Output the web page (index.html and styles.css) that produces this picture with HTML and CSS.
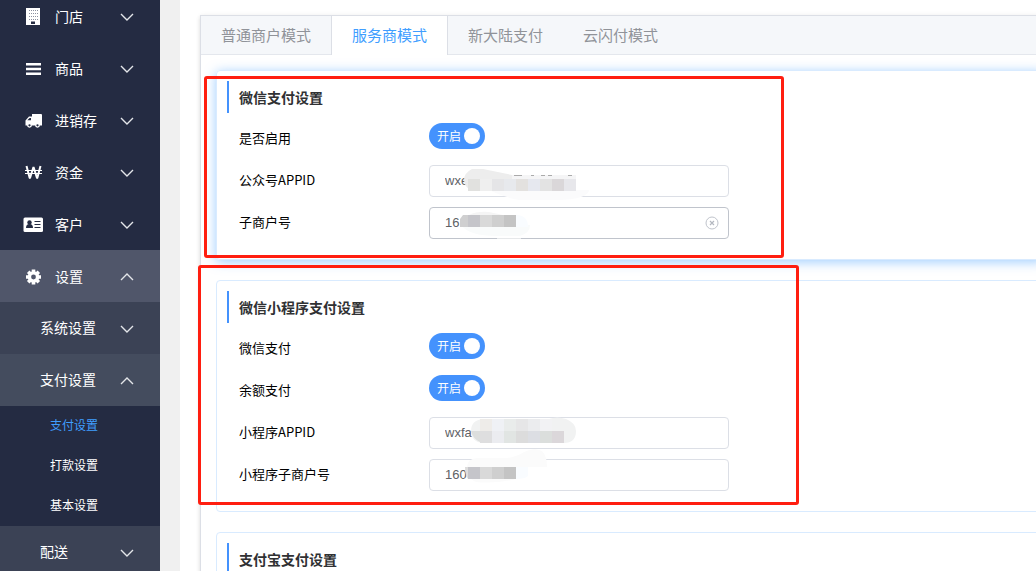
FILE: index.html
```html
<!DOCTYPE html>
<html lang="zh-CN">
<head>
  <meta charset="UTF-8" />
  <title>支付设置</title>
  <meta name="viewport" content="width=device-width, initial-scale=1.0" />
  <link rel="stylesheet" href="styles.css">
</head>
<body>
  <svg class="defs" aria-hidden="true">
    <symbol id="down" viewBox="0 0 14 8"><path d="M1 1l6 6 6-6" fill="none" stroke="#e4e6ea" stroke-width="1.4"/></symbol>
    <symbol id="up" viewBox="0 0 14 8"><path d="M1 7l6-6 6 6" fill="none" stroke="#e4e6ea" stroke-width="1.4"/></symbol>
  </svg>

  <div class="page">
    <nav class="sidebar">
      <a class="item" href="#">
        <svg class="icon" viewBox="0 0 24 20"><path fill="#fff" d="M5 2h14v17H5z"/><path d="M8 4.5h9M8 7.5h9M8 10.5h9M8 13.5h9" stroke="#8b90a0" stroke-width="1" stroke-dasharray="1 1"/><path fill="#242b42" d="M10 15.500h4V18h-4z"/></svg>
        <span>门店</span><svg class="arrow"><use href="#down"/></svg>
      </a>
      <a class="item" href="#">
        <svg class="icon" viewBox="0 0 24 20"><path fill="#fff" d="M5 5h15v2.400H5zM5 9.800h15v2.400H5zM5 14.600h15V17H5z"/></svg>
        <span>商品</span><svg class="arrow"><use href="#down"/></svg>
      </a>
      <a class="item" href="#">
        <svg class="icon" viewBox="0 0 24 20"><path fill="#fff" d="M11 4h9q1 0 1 1v10.500H4.500V10.500L8 6.500h3z"/><path fill="#242b42" d="M6.300 10.300L8.600 8H10v2.300z"/><g fill="#242b42" stroke="#fff" stroke-width="1.300"><circle cx="8.500" cy="15.300" r="1.800"/><circle cx="16.500" cy="15.300" r="1.800"/></g></svg>
        <span>进销存</span><svg class="arrow"><use href="#down"/></svg>
      </a>
      <a class="item" href="#">
        <svg class="icon" viewBox="0 0 24 20"><path d="M5.500 4l3.200 12h.3L12.500 5l3.500 11h.3L19.500 4" fill="none" stroke="#fff" stroke-width="2" stroke-linejoin="bevel"/><path d="M4 8.500h17M4 11.500h17" stroke="#fff" stroke-width="1"/></svg>
        <span>资金</span><svg class="arrow"><use href="#down"/></svg>
      </a>
      <a class="item" href="#">
        <svg class="icon" viewBox="0 0 24 20"><rect x="2.500" y="3.500" width="19.500" height="14.500" rx="1.500" fill="#fff"/><g fill="#242b42"><circle cx="8.500" cy="8.500" r="2.200"/><path d="M5 14q0-4 3.500-4t3.500 4z"/></g><path d="M13.500 7.500h6M13.500 10.500h6M13.500 13.500h6" stroke="#242b42" stroke-width="1"/></svg>
        <span>客户</span><svg class="arrow"><use href="#down"/></svg>
      </a>
      <a class="item open" href="#">
        <svg class="icon" viewBox="0 0 24 20"><g stroke="#fff" stroke-width="3.600"><path d="M12.500 3.500v15M5 11h15M7.200 5.700l10.600 10.600M17.800 5.700L7.200 16.300"/></g><circle cx="12.500" cy="11" r="5.800" fill="#fff"/><circle cx="12.500" cy="11" r="2.400" fill="#50566a"/></svg>
        <span>设置</span><svg class="arrow"><use href="#up"/></svg>
      </a>
      <a class="item sub" href="#"><span>系统设置</span><svg class="arrow"><use href="#down"/></svg></a>
      <a class="item sub open" href="#"><span>支付设置</span><svg class="arrow"><use href="#up"/></svg></a>
      <a class="leaf active" href="#">支付设置</a>
      <a class="leaf" href="#">打款设置</a>
      <a class="leaf" href="#">基本设置</a>
      <a class="item sub" href="#"><span>配送</span><svg class="arrow"><use href="#down"/></svg></a>
    </nav>

    <main class="main">
      <div class="tabs">
        <div class="tab-header">
          <button class="tab" type="button">普通商户模式</button>
          <button class="tab active" type="button">服务商模式</button>
          <button class="tab" type="button">新大陆支付</button>
          <button class="tab" type="button">云闪付模式</button>
        </div>

        <div class="tab-body">
          <section class="card hover">
            <h2>微信支付设置</h2>
            <div class="row">
              <label for="wxEnable">是否启用</label>
              <div class="switch"><span>开启</span><input type="checkbox" id="wxEnable" checked></div>
            </div>
            <div class="row">
              <label for="wxAppid">公众号APPID</label>
              <div class="field">
                <input type="text" id="wxAppid" value="wxe">
                <svg class="mask" viewBox="0 0 300 32">
                  <path fill="#fbfbfc" d="M60 25h100q0 4-8 7-8 3-25 3H90q-16-3-30-10z"/>
                  <path fill="#ededed" d="M43 4h11l29 6v4h18v12H43q-8-4-8-11t8-11z"/>
                  <path fill="#f5f5f6" d="M83 10h64v4H83z"/>
                  <path fill="#aaa" d="M85 10h8v1h-8zM102 10h3v1h-3zM112 10h4v1h-4zM119 10h4v1h-4zM139 10h4v1h-4z"/>
                  <path fill="#e1e1df" d="M39 14h12v12H39z"/><path fill="#efefef" d="M51 14h12v12H51z"/>
                  <path fill="#e5e5e7" d="M63 14h12v12H63z"/><path fill="#e7e9ed" d="M75 14h12v12H75z"/>
                  <path fill="#e3e1df" d="M87 14h12v12H87z"/><path fill="#e6e8ef" d="M99 14h12v12H99z"/>
                  <path fill="#e3e3e3" d="M111 14h12v12h-12z"/><path fill="#dad7d9" d="M123 14h12v12h-12z"/>
                  <path fill="#e7e7eb" d="M135 14h12v12h-12z"/>
                </svg>
              </div>
            </div>
            <div class="row">
              <label for="wxMch">子商户号</label>
              <div class="field focus">
                <input type="text" id="wxMch" value="16">
                <svg class="mask" viewBox="0 0 300 32">
                  <path fill="#f9fbfb" d="M32 18h69q0 8-10 11H68q-28 0-36-11z"/>
                  <path fill="#e6e8ea" d="M68 31h24v1H68z"/>
                  <path fill="#f9fcff" d="M87 8q12 0 12 12H87z"/>
                  <path fill="#f5f5f5" d="M40 8q8-4 20-3l14 3z"/>
                  <path fill="#cfcfd0" d="M34 8h5v12h-8v-8z"/><path fill="#c5c5ca" d="M39 8h12v12H39z"/>
                  <path fill="#d9d9d9" d="M51 8h12v12H51z"/><path fill="#cfcfcf" d="M63 8h12v12H63z"/>
                  <path fill="#c4c4c4" d="M75 8h12v12H75z"/>
                </svg>
                <button class="clear" type="button" aria-label="清空">
                  <svg viewBox="0 0 14 14"><circle cx="7" cy="7" r="6" fill="none" stroke="#c0c4cc"/><path d="M5 5l4 4M9 5L5 9" stroke="#b4b8c0" stroke-width="1.200"/></svg>
                </button>
              </div>
            </div>
            <div class="mark mark-first"></div>
          </section>

          <section class="card">
            <h2>微信小程序支付设置</h2>
            <div class="row">
              <label for="miniWx">微信支付</label>
              <div class="switch"><span>开启</span><input type="checkbox" id="miniWx" checked></div>
            </div>
            <div class="row">
              <label for="miniBalance">余额支付</label>
              <div class="switch"><span>开启</span><input type="checkbox" id="miniBalance" checked></div>
            </div>
            <div class="row">
              <label for="miniAppid">小程序APPID</label>
              <div class="field">
                <input type="text" id="miniAppid" value="wxfa">
                <svg class="mask" viewBox="0 0 300 32">
                  <path fill="#f1f2f2" d="M54 2h66q8-3 17 0 10 4 10 12 0 12-12 12H54q-12-1-12-12T54 2z"/>
                  <path fill="#eeece9" d="M51 2h12v12H51z"/><path fill="#eff1f5" d="M63 2h12v12H63z"/>
                  <path fill="#e9eceb" d="M75 2h12v12H75z"/><path fill="#e6e6e7" d="M87 2h12v12H87z"/>
                  <path fill="#ebecee" d="M99 2h12v12H99z"/><path fill="#f2f2f4" d="M111 2h12v12h-12z"/>
                  <path fill="#dcdedd" d="M42 14h9v11q-7-3-9-11z"/><path fill="#dededf" d="M51 14h12v12H51z"/>
                  <path fill="#ebecf0" d="M63 14h12v12H63z"/><path fill="#e1e5e3" d="M75 14h12v12H75z"/>
                  <path fill="#dcdcdc" d="M87 14h12v12H87z"/><path fill="#dcdee3" d="M99 14h12v12H99z"/>
                  <path fill="#dbdedc" d="M111 14h12v12h-12z"/><path fill="#dbd7da" d="M123 14h12v12h-12z"/>
                </svg>
              </div>
            </div>
            <div class="row">
              <label for="miniMch">小程序子商户号</label>
              <div class="field">
                <input type="text" id="miniMch" value="160">
                <svg class="mask" viewBox="0 0 300 32">
                  <path fill="#fbfbfb" d="M38 8q0-8 10-9h30q10-1 17-6 10-5 18-1 5 5 5 16H87v12q-20 5-40 3-9-3-9-15z"/>
                  <path fill="#f9fcff" d="M87 8h12v9q-3 3-12 3z"/>
                  <path fill="#dddddd" d="M36 8h3v12q-3-4-3-12z"/><path fill="#c5c5ca" d="M39 8h12v12H39z"/>
                  <path fill="#d9d9d9" d="M51 8h12v12H51z"/><path fill="#cfcfcf" d="M63 8h12v12H63z"/>
                  <path fill="#c4c4c4" d="M75 8h12v12H75z"/>
                </svg>
              </div>
            </div>
            <div class="mark mark-second"></div>
          </section>

          <section class="card">
            <h2>支付宝支付设置</h2>
          </section>
        </div>
      </div>
    </main>
  </div>
</body>
</html>
```
FILE: styles.css
```css
* {
  box-sizing: border-box;
}

body {
  margin: 0;
  background: #f0f0f0;
  font-family: "Noto Sans CJK SC", sans-serif;
  font-size: 13px;
  color: #000;
}

.defs {
  display: none;
}

.page {
  display: flex;
  gap: 20px;
  height: 100vh;
  overflow: hidden;
}

/* sidebar, scrolled down a little */
.sidebar {
  flex: 0 0 160px;
  margin-top: -10px;
  background: #242b42;
}

.item {
  display: flex;
  align-items: center;
  height: 52px;
  padding: 0 26px 0 21px;
  color: #fff;
  font-size: 14px;
  text-decoration: none;
}

.item.open {
  background: #50566a;
}

.item.sub {
  padding-left: 40px;
  background: #3b4255;
}

.item.sub.open {
  background: #444c5e;
}

.item.sub span {
  padding-bottom: 2px;
}

.icon {
  width: 24px;
  height: 20px;
  margin-right: 10px;
}

.arrow {
  width: 14px;
  height: 8px;
  margin-top: 2px;
  margin-left: auto;
}

.leaf {
  display: block;
  height: 40px;
  padding-left: 50px;
  color: #fff;
  font-size: 12px;
  line-height: 38px;
  text-decoration: none;
}

.leaf.active {
  color: #409eff;
}

/* content is wider than the window and gets cut on the right */
.main {
  flex: 1 0 900px;
  padding: 15px 20px;
  background: #fff;
}

.tabs {
  border: 1px solid #dcdfe6;
  box-shadow: 0 2px 4px rgba(0, 0, 0, 0.12), 0 0 6px rgba(0, 0, 0, 0.04);
}

.tab-header {
  display: flex;
  height: 39px;
  background: #f5f7fa;
  border-bottom: 1px solid #e4e7ed;
}

.tab {
  height: 39px;
  padding: 0 20px 2px;
  border: 0;
  background: none;
  color: #909399;
  font-family: inherit;
  font-size: 15px;
  cursor: pointer;
}

.tab.active {
  border: solid #dcdfe6;
  border-width: 0 1px;
  background: #fff;
  color: #409eff;
}

.tab-body {
  display: flex;
  flex-direction: column;
  gap: 20px;
  padding: 15px;
}

.card {
  position: relative;
  padding: 10px;
  border: 1px solid #d9ebff;
  border-radius: 4px;
}

.card.hover {
  box-shadow: 0 2px 12px rgba(64, 158, 255, 0.5);
}

.card h2 {
  margin: 0;
  padding-left: 10px;
  border-left: 2px solid #4492fd;
  color: #303133;
  font-size: 14px;
  line-height: 32px;
}

.row {
  display: flex;
  height: 32px;
  margin: 10px 0 10px 12px;
}

.row label {
  width: 190px;
  line-height: 30px;
}

.switch {
  display: flex;
  align-items: center;
  justify-content: space-between;
  width: 56px;
  height: 26px;
  padding: 0 5px 0 8px;
  border-radius: 13px;
  background: #4492fd;
  color: #fff;
  font-size: 12px;
}

.switch span {
  padding-bottom: 2px;
}

.switch input {
  appearance: none;
  width: 16px;
  height: 16px;
  margin: 0;
  border-radius: 50%;
  background: #fff;
  cursor: pointer;
}

.field {
  position: relative;
  width: 300px;
}

.field input {
  width: 100%;
  height: 32px;
  padding: 0 15px 2px;
  border: 1px solid #dcdfe6;
  border-radius: 4px;
  background: #fff;
  color: #606266;
  font-family: "Liberation Sans", sans-serif;
  font-size: 13px;
}

.field.focus input {
  border-color: #c0c4cc;
}

/* mosaic over the private part of a value */
.mask {
  position: absolute;
  top: 0;
  left: 0;
  width: 300px;
  height: 32px;
  overflow: visible;
  pointer-events: none;
}

.clear {
  position: absolute;
  top: 9px;
  right: 10px;
  width: 14px;
  height: 14px;
  padding: 0;
  border: 0;
  background: none;
  cursor: pointer;
}

.clear svg {
  display: block;
}

/* red frames over the cards */
.mark {
  position: absolute;
  z-index: 1;
  border: 3px solid #ff1e10;
  border-radius: 3px;
  pointer-events: none;
}

.mark-first {
  top: 5px;
  left: -13px;
  width: 580px;
  height: 182px;
}

.mark-second {
  top: -16px;
  left: -19px;
  width: 601px;
  height: 240px;
}
```
